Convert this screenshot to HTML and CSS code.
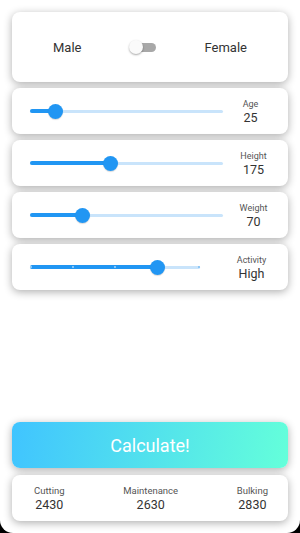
FILE: index.html
```html
<!DOCTYPE html>
<html lang="en">
<head>
    <meta charset="UTF-8">
    <meta name="viewport" content="width=device-width, initial-scale=1.0">
    <title>Calorie Calculator</title>
    <link rel="stylesheet" href="styles.css">
</head>
<body>
    <div class="screen">
        <!-- Jins tanlash -->
        <div class="card gender-card">
            <span class="gender">Male</span>
            <div class="switch">
                <div class="switch-track"></div>
                <div class="switch-thumb"></div>
            </div>
            <span class="gender">Female</span>
        </div>

        <div class="card slider-card">
            <div class="slider">
                <div class="track"></div>
                <div class="track-active" style="width: 13%"></div>
                <div class="thumb" style="left: 13%"></div>
            </div>
            <div class="stat stat-age">
                <div class="stat-label">Age</div>
                <div class="stat-value">25</div>
            </div>
        </div>

        <div class="card slider-card">
            <div class="slider">
                <div class="track"></div>
                <div class="track-active" style="width: 41.5%"></div>
                <div class="thumb" style="left: 41.5%"></div>
            </div>
            <div class="stat">
                <div class="stat-label">Height</div>
                <div class="stat-value">175</div>
            </div>
        </div>

        <div class="card slider-card">
            <div class="slider">
                <div class="track"></div>
                <div class="track-active" style="width: 27%"></div>
                <div class="thumb" style="left: 27%"></div>
            </div>
            <div class="stat">
                <div class="stat-label">Weight</div>
                <div class="stat-value">70</div>
            </div>
        </div>

        <div class="card slider-card">
            <div class="slider slider-short">
                <div class="track"></div>
                <div class="track-active" style="width: 75%"></div>
                <span class="tick" style="left: 0%"></span>
                <span class="tick" style="left: 25%"></span>
                <span class="tick" style="left: 50%"></span>
                <span class="tick tick-off" style="left: 100%"></span>
                <div class="thumb" style="left: 75%"></div>
            </div>
            <div class="stat stat-activity">
                <div class="stat-label">Activity</div>
                <div class="stat-value">High</div>
            </div>
        </div>

        <div class="bottom">
            <button class="calc-button">Calculate!</button>
            <div class="card results">
                <div class="result">
                    <div class="result-label">Cutting</div>
                    <div class="result-value">2430</div>
                </div>
                <div class="result">
                    <div class="result-label">Maintenance</div>
                    <div class="result-value">2630</div>
                </div>
                <div class="result">
                    <div class="result-label">Bulking</div>
                    <div class="result-value">2830</div>
                </div>
            </div>
        </div>
    </div>
</body>
</html>
```

FILE: styles.css
```css
html {
    background-color: #000;
}
body {
    margin: 0;
    font-family: Roboto, "Liberation Sans", sans-serif;
}
.screen {
    height: 533px;
    box-sizing: border-box;
    background: #fff;
    border-radius: 0 0 13px 13px;
    padding: 12px;
    display: flex;
    flex-direction: column;
    gap: 6px;
    overflow: hidden;
}
.card {
    background: #fff;
    border-radius: 8px;
    box-shadow: 0 2px 9px rgba(0, 0, 0, 0.32);
}
.gender-card {
    height: 70px;
    display: flex;
    align-items: center;
    justify-content: space-between;
    padding: 0 41px;
}
.gender {
    font-size: 13px;
    color: #333;
}
/* Switch */
.switch {
    position: relative;
    width: 27px;
    height: 15px;
    margin-right: 2px;
}
.switch-track {
    position: absolute;
    left: 5px;
    right: 0;
    top: 3px;
    height: 9px;
    border-radius: 5px;
    background: #a8a8a8;
}
.switch-thumb {
    position: absolute;
    left: 0;
    top: 0;
    width: 14px;
    height: 14px;
    border-radius: 50%;
    background: #fafafa;
    box-shadow: 0 1px 2px rgba(0, 0, 0, 0.35);
}
/* Slider kartalar */
.slider-card {
    height: 46px;
    display: flex;
    align-items: center;
    padding: 0 10px 0 18px;
}
.slider {
    position: relative;
    width: 193px;
    height: 16px;
}
.slider-short {
    width: 170px;
    margin-right: 23px;
}
.track {
    position: absolute;
    left: 0;
    right: 0;
    top: 6.5px;
    height: 3px;
    border-radius: 2px;
    background: #c9e4fb;
}
.track-active {
    position: absolute;
    left: 0;
    top: 6px;
    height: 4px;
    border-radius: 2px;
    background: #2196f3;
}
.thumb {
    position: absolute;
    top: 0.5px;
    width: 15px;
    height: 15px;
    margin-left: -7.5px;
    border-radius: 50%;
    background: #2196f3;
    box-shadow: 0 1px 1px rgba(0, 0, 0, 0.15);
}
.tick {
    position: absolute;
    top: 7px;
    width: 2px;
    height: 2px;
    margin-left: -1px;
    border-radius: 50%;
    background: rgba(255, 255, 255, 0.6);
}
.tick:first-of-type {
    margin-left: 0;
}
.tick-off {
    background: #7cbdf3;
    margin-left: -2px;
}
.stat {
    flex: 1;
    text-align: center;
    padding-left: 6px;
}
.stat-age {
    padding-left: 0;
}
.stat-activity {
    padding-left: 2px;
}
.stat-label {
    font-size: 9px;
    color: #555;
    line-height: 12px;
}
.stat-value {
    font-size: 12.5px;
    color: #333;
    line-height: 15px;
}
/* Pastki qism */
.bottom {
    margin-top: auto;
    display: flex;
    flex-direction: column;
    gap: 7px;
}
.calc-button {
    height: 46px;
    border: none;
    border-radius: 8px;
    background: linear-gradient(100deg, #40c4ff, #64ffda);
    color: #fff;
    font-family: Roboto, "Liberation Sans", sans-serif;
    font-size: 18px;
    box-shadow: 0 2px 9px rgba(0, 0, 0, 0.32);
}
.results {
    height: 46px;
    display: flex;
    align-items: center;
    justify-content: space-between;
    padding: 0 20px 0 22px;
}
.result {
    text-align: center;
}
.result-label {
    font-size: 9.5px;
    color: #555;
    line-height: 13px;
}
.result-value {
    font-size: 12.5px;
    color: #333;
    line-height: 15px;
}
```
